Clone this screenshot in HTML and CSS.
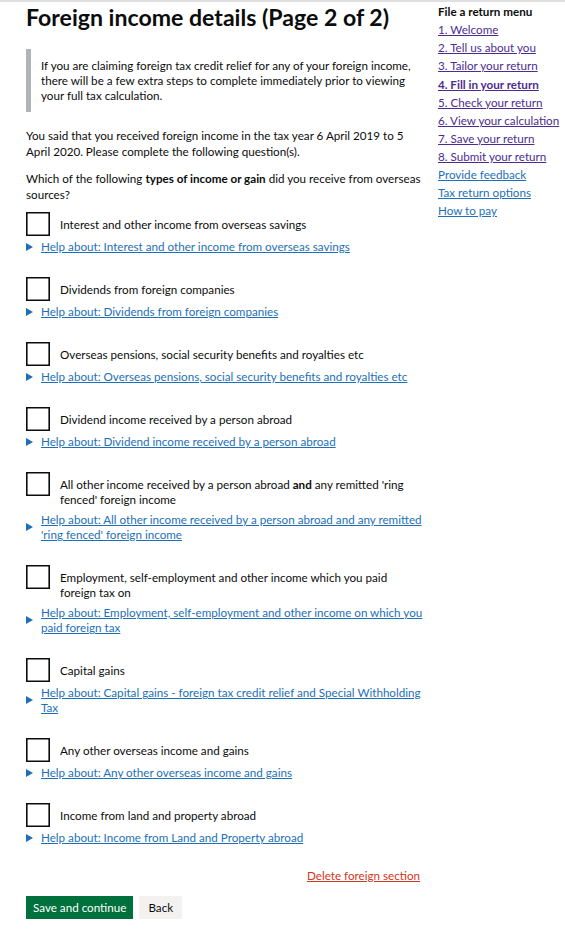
FILE: index.html
```html
<!DOCTYPE html>
<html lang="en">
<head>
<meta charset="utf-8">
<title>Foreign income details</title>
<link rel="stylesheet" href="styles.css">
</head>
<body>
<div class="page">
  <main class="main">
    <h1 class="title">Foreign income details (Page 2 of 2)</h1>
    <div class="inset">If you are claiming foreign tax credit relief for any of your foreign income, there will be a few extra steps to complete immediately prior to viewing your full tax calculation.</div>
    <p class="para">You said that you received foreign income in the tax year 6 April 2019 to 5 April 2020. Please complete the following question(s).</p>
    <p class="para question">Which of the following <b>types of income or gain</b> did you receive from overseas sources?</p>

    <div class="item">
      <div class="row"><span class="box"></span><span class="label">Interest and other income from overseas savings</span></div>
      <div class="help"><span class="tri"></span><a href="#" class="link">Help about: Interest and other income from overseas savings</a></div>
    </div>
    <div class="item">
      <div class="row"><span class="box"></span><span class="label">Dividends from foreign companies</span></div>
      <div class="help"><span class="tri"></span><a href="#" class="link">Help about: Dividends from foreign companies</a></div>
    </div>
    <div class="item">
      <div class="row"><span class="box"></span><span class="label">Overseas pensions, social security benefits and royalties etc</span></div>
      <div class="help"><span class="tri"></span><a href="#" class="link">Help about: Overseas pensions, social security benefits and royalties etc</a></div>
    </div>
    <div class="item">
      <div class="row"><span class="box"></span><span class="label">Dividend income received by a person abroad</span></div>
      <div class="help"><span class="tri"></span><a href="#" class="link">Help about: Dividend income received by a person abroad</a></div>
    </div>
    <div class="item">
      <div class="row"><span class="box"></span><span class="label">All other income received by a person abroad <b>and</b> any remitted 'ring fenced' foreign income</span></div>
      <div class="help"><span class="tri"></span><a href="#" class="link">Help about: All other income received by a person abroad and any remitted 'ring fenced' foreign income</a></div>
    </div>
    <div class="item">
      <div class="row"><span class="box"></span><span class="label">Employment, self-employment and other income which you paid foreign tax on</span></div>
      <div class="help"><span class="tri"></span><a href="#" class="link">Help about: Employment, self-employment and other income on which you paid foreign tax</a></div>
    </div>
    <div class="item">
      <div class="row"><span class="box"></span><span class="label">Capital gains</span></div>
      <div class="help"><span class="tri"></span><a href="#" class="link">Help about: Capital gains - foreign tax credit relief and Special Withholding Tax</a></div>
    </div>
    <div class="item">
      <div class="row"><span class="box"></span><span class="label">Any other overseas income and gains</span></div>
      <div class="help"><span class="tri"></span><a href="#" class="link">Help about: Any other overseas income and gains</a></div>
    </div>
    <div class="item">
      <div class="row"><span class="box"></span><span class="label">Income from land and property abroad</span></div>
      <div class="help"><span class="tri"></span><a href="#" class="link">Help about: Income from Land and Property abroad</a></div>
    </div>

    <div class="delete-row"><a href="#" class="delete">Delete foreign section</a></div>
    <div class="buttons">
      <button class="btn btn-primary" type="button">Save and continue</button>
      <button class="btn btn-secondary" type="button">Back</button>
    </div>
  </main>
  <nav class="menu">
    <div class="menu-title">File a return menu</div>
    <a href="#" class="menu-link visited">1. Welcome</a>
    <a href="#" class="menu-link visited">2. Tell us about you</a>
    <a href="#" class="menu-link visited">3. Tailor your return</a>
    <a href="#" class="menu-link visited current">4. Fill in your return</a>
    <a href="#" class="menu-link visited">5. Check your return</a>
    <a href="#" class="menu-link visited">6. View your calculation</a>
    <a href="#" class="menu-link visited">7. Save your return</a>
    <a href="#" class="menu-link visited">8. Submit your return</a>
    <a href="#" class="menu-link">Provide feedback</a>
    <a href="#" class="menu-link">Tax return options</a>
    <a href="#" class="menu-link">How to pay</a>
  </nav>
</div>
</body>
</html>
```
FILE: styles.css
```css
html, body {
  margin: 0;
  padding: 0;
  background: #ffffff;
}
body {
  border-top: 2px solid #dee0e2;
  font-family: Lato, "Liberation Sans", Arial, sans-serif;
  color: #0b0c0c;
  font-size: 11.65px;
  line-height: 15px;
}
.page {
  display: flex;
  padding-left: 26px;
}
.main {
  width: 400px;
  flex: none;
}
.title {
  font-size: 23.1px;
  line-height: 25px;
  font-weight: 700;
  margin: 3px 0 0;
}
.inset {
  margin-top: 19px;
  border-left: 5px solid #b1b4b6;
  padding: 9px 4px 9px 10px;
}
.para {
  margin: 0 0 11px;
  line-height: 16px;
}
.inset + .para {
  margin-top: 16px;
}
.para.question {
  margin-bottom: 9px;
}
.item {
  margin-bottom: 23px;
}
.row {
  display: flex;
  align-items: flex-start;
}
.box {
  box-sizing: border-box;
  width: 24px;
  height: 24px;
  border: 1px solid #0b0c0c;
  box-shadow: inset 0 0 0 0.6px #0b0c0c;
  flex: none;
}
.label {
  padding: 5px 0 2px 10px;
  max-width: 354px;
}
.help {
  display: flex;
  align-items: center;
  margin-top: 3px;
}
.tri {
  flex: none;
  width: 0;
  height: 0;
  border-top: 4px solid transparent;
  border-bottom: 4px solid transparent;
  border-left: 7px solid #1d70b8;
  margin-right: 8px;
}
.link {
  color: #1d70b8;
  text-decoration: underline;
}
.delete-row {
  display: flex;
  justify-content: flex-end;
  padding-right: 6px;
}
.delete {
  color: #d4351c;
}
.buttons {
  display: flex;
  gap: 6px;
  margin-top: 13px;
}
.btn {
  font-family: inherit;
  font-size: 11.65px;
  line-height: 15px;
  border: 0;
  border-radius: 0;
  padding: 4px 7px;
  cursor: pointer;
}
.btn-primary {
  background: #00703c;
  color: #ffffff;
  box-shadow: 0 2px 0 #002d18;
}
.btn-secondary {
  background: #f3f2f1;
  color: #0b0c0c;
  box-shadow: 0 2px 0 #929191;
  padding: 4px 9px;
}
.menu {
  margin-left: 12px;
  display: flex;
  flex-direction: column;
  align-items: flex-start;
  padding-top: 1px;
}
.menu-title {
  font-weight: 700;
  line-height: 18px;
}
.menu-link {
  color: #1d70b8;
  line-height: 18px;
  white-space: nowrap;
}
.menu-link.visited {
  color: #4c2c92;
}
.menu-link.current {
  font-weight: 700;
  line-height: 19px;
}
```
